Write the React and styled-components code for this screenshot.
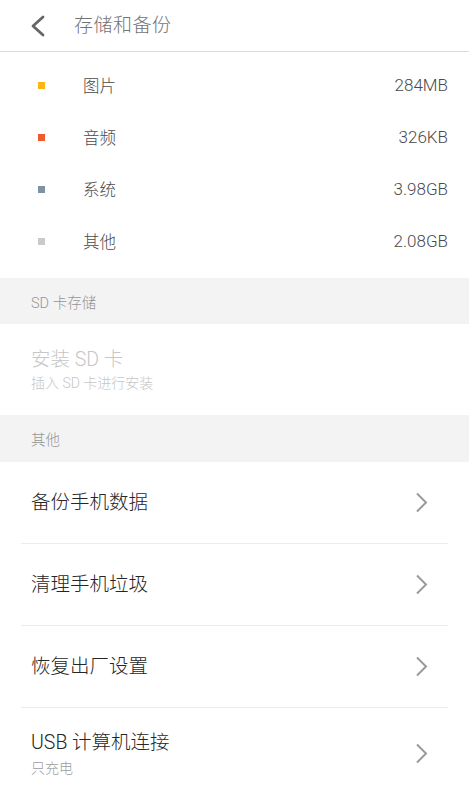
import React from "react";
import styled, { createGlobalStyle } from "styled-components";

const GlobalStyle = createGlobalStyle`
  html, body {
    margin: 0;
    padding: 0;
    background: #ffffff;
  }
  body {
    font-family: "Roboto", "Noto Sans CJK SC", "Noto Sans", sans-serif;
    font-weight: 300;
    -webkit-font-smoothing: antialiased;
  }
`;

const Page = styled.div`
  width: 469px;
  min-height: 800px;
  background: #ffffff;
  overflow: hidden;
`;

const Header = styled.header`
  height: 51px;
  display: flex;
  align-items: center;
  border-bottom: 1px solid #dcdcdc;
`;

const BackButton = styled.div`
  width: 74px;
  height: 51px;
  display: flex;
  align-items: center;
  padding-left: 29px;
  box-sizing: border-box;
`;

const Title = styled.h1`
  margin: 0 0 5px;
  font-size: 19px;
  font-weight: 300;
  color: #737373;
  letter-spacing: 0.5px;
`;

const UsageList = styled.ul`
  list-style: none;
  margin: 0;
  padding: 7px 0 11px;
`;

const UsageRow = styled.li`
  height: 52px;
  display: flex;
  align-items: center;
  padding: 0 21px 0 38px;
`;

const Dot = styled.span`
  width: 7px;
  height: 7px;
  background: ${(p) => p.$color};
  margin-right: 38px;
`;

const UsageLabel = styled.span`
  flex: 1;
  font-size: 16.5px;
  color: #4a4a4a;
`;

const UsageValue = styled.span`
  font-size: 17px;
  color: #4a4a4a;
`;

const SectionHeader = styled.div`
  height: ${(p) => p.$height}px;
  background: #f3f3f3;
  display: flex;
  align-items: center;
  padding-left: 31px;
  font-size: 14.5px;
  color: #959595;
`;

const SdBlock = styled.div`
  height: 91px;
  display: flex;
  flex-direction: column;
  justify-content: center;
  padding: 0 31px;
`;

const SdTitle = styled.div`
  font-size: 19.5px;
  line-height: 26px;
  color: #c6c6c6;
`;

const SdSub = styled.div`
  font-size: 14px;
  line-height: 20px;
  color: #c6c6c6;
`;

const MenuList = styled.div`
  display: flex;
  flex-direction: column;
`;

const MenuItem = styled.div`
  height: ${(p) => (p.$tall ? 91 : 82)}px;
  margin: 0 21px;
  padding: 0 20px 0 10px;
  display: flex;
  align-items: center;
  border-bottom: ${(p) => (p.$last ? "none" : "1px solid #ececec")};
  box-sizing: border-box;
`;

const MenuText = styled.div`
  flex: 1;
  display: flex;
  flex-direction: column;
`;

const MenuTitle = styled.span`
  font-size: 19.5px;
  line-height: 27px;
  color: #262626;
`;

const MenuSub = styled.span`
  margin-top: 2px;
  font-size: 14px;
  line-height: 20px;
  color: #9c9c9c;
`;

const BackIcon = () => (
  <svg width="16" height="22" viewBox="0 0 16 22">
    <path d="M14 2 L4 11 L14 20" fill="none" stroke="#666" strokeWidth="2.8" strokeLinecap="round" strokeLinejoin="round" />
  </svg>
);

const Chevron = () => (
  <svg width="13" height="21" viewBox="0 0 13 21">
    <path d="M2 1.5 L11 10.5 L2 19.5" fill="none" stroke="#9a9a9a" strokeWidth="2" strokeLinejoin="miter" />
  </svg>
);

const usage = [
  { label: "图片", value: "284MB", color: "#fbb616" },
  { label: "音频", value: "326KB", color: "#f15a2b" },
  { label: "系统", value: "3.98GB", color: "#7c93a5" },
  { label: "其他", value: "2.08GB", color: "#cacaca" },
];

const menu = [
  { title: "备份手机数据" },
  { title: "清理手机垃圾" },
  { title: "恢复出厂设置" },
  { title: "USB 计算机连接", sub: "只充电" },
];

export default function App() {
  return (
    <Page>
      <GlobalStyle />
      <Header>
        <BackButton>
          <BackIcon />
        </BackButton>
        <Title>存储和备份</Title>
      </Header>

      <UsageList>
        {usage.map((u) => (
          <UsageRow key={u.label}>
            <Dot $color={u.color} />
            <UsageLabel>{u.label}</UsageLabel>
            <UsageValue>{u.value}</UsageValue>
          </UsageRow>
        ))}
      </UsageList>

      <SectionHeader $height={46}>SD 卡存储</SectionHeader>
      <SdBlock>
        <SdTitle>安装 SD 卡</SdTitle>
        <SdSub>插入 SD 卡进行安装</SdSub>
      </SdBlock>

      <SectionHeader $height={47}>其他</SectionHeader>
      <MenuList>
        {menu.map((m, i) => (
          <MenuItem key={m.title} $tall={!!m.sub} $last={i === menu.length - 1}>
            <MenuText>
              <MenuTitle>{m.title}</MenuTitle>
              {m.sub && <MenuSub>{m.sub}</MenuSub>}
            </MenuText>
            <Chevron />
          </MenuItem>
        ))}
      </MenuList>
    </Page>
  );
}
